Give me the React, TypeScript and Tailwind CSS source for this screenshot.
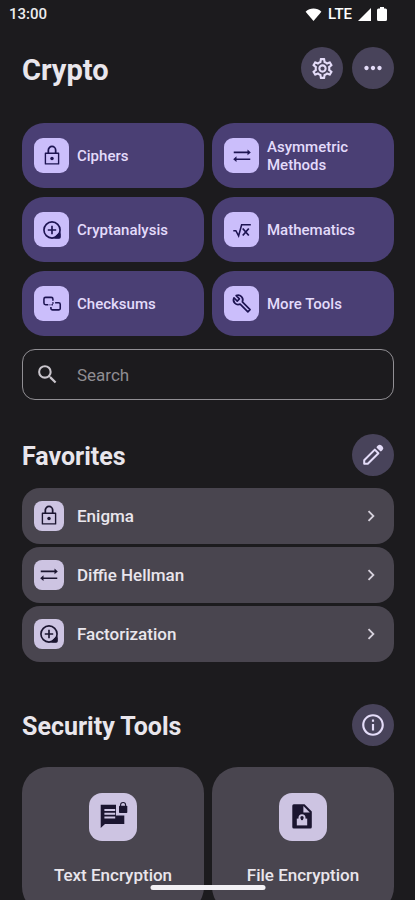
import type { ReactNode } from 'react';
import {
  MdChevronRight,
  MdInfoOutline,
  MdMoreHoriz,
  MdOutlineSettings,
  MdSearch,
} from 'react-icons/md';

const LockIcon = () => (
  <svg viewBox="0 0 24 24" className="size-[22px]" fill="none" stroke="currentColor" strokeWidth="1.5" aria-hidden="true">
    <path d="M4.8 9h14.4v11.6H4.8z" strokeLinejoin="round" />
    <path d="M8 9V5.6a4 4 0 0 1 8 0V9" strokeWidth="1.9" />
    <circle cx="12" cy="14.6" r="1.9" fill="currentColor" stroke="none" />
  </svg>
);

const ArrowsIcon = () => (
  <svg viewBox="0 0 24 24" className="size-[22px]" fill="currentColor" aria-hidden="true">
    <path d="M3 7.2h15V5l3.6 3.1-3.6 3.1V9H3zM21 14.6H6v-2.2l-3.6 3.1L6 18.6v-2.2h15z" />
  </svg>
);

const AnalysisIcon = () => (
  <svg viewBox="0 0 24 24" className="size-[22px]" fill="none" stroke="currentColor" strokeWidth="1.8" aria-hidden="true">
    <circle cx="12" cy="12" r="8.8" />
    <path d="M12 7.4v9.2M7.4 12h9.2" />
    <path d="M21.6 14v5.6a2 2 0 0 1-2 2H14c3.8-.8 6.8-3.8 7.6-7.6z" fill="currentColor" stroke="none" />
    <path d="M20 15.5V20h-4.5z" fill="currentColor" />
  </svg>
);

const RootIcon = () => (
  <svg viewBox="0 0 24 24" className="size-[22px]" fill="none" stroke="currentColor" strokeWidth="1.7" aria-hidden="true">
    <path d="M2.5 12.8h2.8l3 5.6L11.6 6.2H21.6" />
    <path d="M12.8 10.4l6.6 7.6M19.4 10.4l-6.6 7.6" strokeWidth="1.9" />
  </svg>
);

const ChecksumIcon = () => (
  <svg viewBox="0 0 24 24" className="size-[22px]" fill="none" stroke="currentColor" strokeWidth="1.7" aria-hidden="true">
    <path d="M8 12.8H5A1.8 1.8 0 0 1 3.2 11V6.6A1.8 1.8 0 0 1 5 4.8h6.2A1.8 1.8 0 0 1 13 6.6v1.8" />
    <path d="M13 10v2.8H9.4" strokeDasharray="1.6 1.2" />
    <path d="M15.4 10.6h3.8a1.8 1.8 0 0 1 1.8 1.8v4.2a1.8 1.8 0 0 1-1.8 1.8h-6.6a1.8 1.8 0 0 1-1.8-1.8v-1.4" />
  </svg>
);

const WrenchIcon = () => (
  <svg viewBox="0 0 24 24" className="size-[22px]" fill="none" stroke="currentColor" strokeWidth="1.8" strokeLinejoin="round" aria-hidden="true">
    <path d="M3.2 5.2l3.6 3.6 2.4-2.4-3.6-3.6c2-.8 4.3-.4 5.8 1.1 1.6 1.6 1.9 3.9 1 5.8l8.4 8.4-2.4 2.4-8.4-8.4c-1.9.9-4.2.6-5.8-1-1.5-1.5-1.9-3.9-1-5.9z" />
  </svg>
);

const PencilIcon = () => (
  <svg viewBox="0 0 24 24" className="size-6" fill="none" stroke="currentColor" strokeWidth="2" strokeLinejoin="round" aria-hidden="true">
    <path d="M3.2 17.2 13.8 6.6l3.6 3.6L6.8 20.8H3.2z" />
    <path d="M16.6 4.2l1-1a1.6 1.6 0 0 1 2.2 0l1 1a1.6 1.6 0 0 1 0 2.200l-1 1z" fill="currentColor" />
  </svg>
);

const TextLockIcon = () => (
  <svg viewBox="0 0 28 28" className="size-7 overflow-visible" aria-hidden="true">
    <path d="M1.7 1.8H17v10.8h8.3V21H6l-4.300 4z" fill="currentColor" />
    <path d="M5.4 7h10.8M5.4 10.8h10.8M5.4 14.6h10.8" stroke="#cdc4e2" strokeWidth="2" />
    <path d="M21.6 3.5V2a2.5 2.5 0 0 1 5 0v1.5" fill="none" stroke="currentColor" strokeWidth="1.1" />
    <rect x="20" y="2.8" width="8.3" height="7.2" rx="0.8" fill="currentColor" />
  </svg>
);

const FileLockIcon = () => (
  <svg viewBox="0 0 28 28" className="size-7" aria-hidden="true">
    <path d="M4.8 1.3h10.700l7.300 7.200v15.600a1.500 1.500 0 0 1-1.500 1.500H4.800a1.500 1.500 0 0 1-1.500-1.500V2.800a1.500 1.500 0 0 1 1.500-1.500z" fill="currentColor" />
    <path d="M14.4 3v6.400h6.400z" fill="#cdc4e2" />
    <path d="M10.4 16v-1.200a2.600 2.600 0 0 1 5.200 0V16" fill="none" stroke="#cdc4e2" strokeWidth="1.8" />
    <path d="M7.8 15.6h10.400v6.800H7.800z" fill="#cdc4e2" />
    <circle cx="13" cy="16" r="1.2" fill="currentColor" />
  </svg>
);

const categories: { label: string; icon: ReactNode }[] = [
  { label: 'Ciphers', icon: <LockIcon /> },
  { label: 'Asymmetric Methods', icon: <ArrowsIcon /> },
  { label: 'Cryptanalysis', icon: <AnalysisIcon /> },
  { label: 'Mathematics', icon: <RootIcon /> },
  { label: 'Checksums', icon: <ChecksumIcon /> },
  { label: 'More Tools', icon: <WrenchIcon /> },
];

const favorites: { label: string; icon: ReactNode }[] = [
  { label: 'Enigma', icon: <LockIcon /> },
  { label: 'Diffie Hellman', icon: <ArrowsIcon /> },
  { label: 'Factorization', icon: <AnalysisIcon /> },
];

const tools: { label: string; icon: ReactNode }[] = [
  { label: 'Text Encryption', icon: <TextLockIcon /> },
  { label: 'File Encryption', icon: <FileLockIcon /> },
];

function RoundButton({ label, children }: { label: string; children: ReactNode }) {
  return (
    <button type="button" aria-label={label} className="flex size-[42px] items-center justify-center rounded-full bg-[#48435a] text-[#e4dcf8]">
      {children}
    </button>
  );
}

function StatusBar() {
  return (
    <div className="flex h-7 shrink-0 items-center justify-between pl-[9px] pr-7 text-[15px] font-medium text-[#ececee]">
      <span>13:00</span>
      <div className="flex items-center gap-[6px] text-white">
        <svg viewBox="0 0 18 14" className="h-[13px] w-[17px]" fill="currentColor" aria-hidden="true">
          <path d="M9 14 0.5 4C5 -0.5 13 -0.5 17.5 4z" />
        </svg>
        <span>LTE</span>
        <div className="flex items-center gap-[6px]">
          <svg viewBox="0 0 14 14" className="size-[13px]" fill="currentColor" aria-hidden="true">
            <path d="M14 0v14H0z" />
          </svg>
          <svg viewBox="0 0 10 14" className="h-3.5 w-2.5" fill="currentColor" aria-hidden="true">
            <path d="M3 0h4v1.5h1.5A1.5 1.5 0 0 1 10 3v9.5A1.5 1.5 0 0 1 8.5 14h-7A1.5 1.5 0 0 1 0 12.5V3a1.5 1.5 0 0 1 1.5-1.5H3z" />
          </svg>
        </div>
      </div>
    </div>
  );
}

export default function App() {
  return (
    <div className="flex h-screen flex-col overflow-hidden bg-[#1c1b1e] font-['Roboto',sans-serif] text-[#e9e6ec]">
      <StatusBar />
      <main className="min-h-0 flex-1 overflow-y-auto pb-10 pl-[22px] pr-[21px] pt-[19px] [scrollbar-width:none]">
        <header className="flex items-center justify-between">
          <h1 className="pt-1 text-[29px] font-bold leading-9">Crypto</h1>
          <div className="flex gap-[9px]">
            <RoundButton label="Settings">
              <MdOutlineSettings className="size-[25px]" />
            </RoundButton>
            <RoundButton label="More options">
              <MdMoreHoriz className="size-[26px]" />
            </RoundButton>
          </div>
        </header>

        <nav aria-label="Categories" className="mt-[34px] grid grid-cols-2 gap-x-2 gap-y-[9px]">
          {categories.map(({ label, icon }) => (
            <button key={label} type="button" className="flex h-[65px] items-center gap-2 rounded-[22px] bg-[#4a3f74] pl-3 pr-9 text-left text-[15px] font-medium leading-[18px] text-[#e3dbfb]">
              <span className="flex size-[35px] shrink-0 items-center justify-center rounded-[9px] bg-[#cbbefb] text-[#1d1452]">
                {icon}
              </span>
              {label}
            </button>
          ))}
        </nav>

        <label className="mt-[13px] flex h-[51px] items-center gap-[17px] rounded-[13px] border border-[#918f94] pl-3 pr-4 text-[#c9c5cc]">
          <MdSearch className="size-[25px] shrink-0" />
          <input type="search" aria-label="Search" placeholder="Search" className="min-w-0 flex-1 bg-transparent text-[17px] leading-6 outline-none placeholder:text-[#8f8d92]" />
        </label>

        <section aria-labelledby="favorites" className="mt-[34px]">
          <div className="flex items-center justify-between">
            <h2 id="favorites" className="pt-1 text-[25px] font-bold leading-8">Favorites</h2>
            <RoundButton label="Edit favorites">
              <PencilIcon />
            </RoundButton>
          </div>
          <ul className="mt-3 flex flex-col gap-[3px]">
            {favorites.map(({ label, icon }) => (
              <li key={label}>
                <button type="button" className="flex h-14 w-full items-center gap-[13px] rounded-[18px] bg-[#49454f] pl-3 pr-3 text-left text-[17px] font-medium">
                  <span className="flex size-[30px] shrink-0 items-center justify-center rounded-lg bg-[#cdc4e2] text-[#1b1530]">
                    {icon}
                  </span>
                  <span className="flex-1 pt-0.5">{label}</span>
                  <MdChevronRight className="size-[22px] text-[#d6d1dc]" />
                </button>
              </li>
            ))}
          </ul>
        </section>

        <section aria-labelledby="security" className="mt-[42px]">
          <div className="flex items-center justify-between">
            <h2 id="security" className="pt-1 text-[25px] font-bold leading-8">Security Tools</h2>
            <RoundButton label="About security tools">
              <MdInfoOutline className="size-[26px]" />
            </RoundButton>
          </div>
          <div className="mt-[21px] grid grid-cols-2 gap-2">
            {tools.map(({ label, icon }) => (
              <button key={label} type="button" className="flex flex-col items-center gap-6 rounded-[26px] bg-[#49454f] px-3 pb-7 pt-[26px] text-[17px] font-medium leading-5">
                <span className="flex size-12 items-center justify-center rounded-[13px] bg-[#cdc4e2] text-[#1b1530]">
                  {icon}
                </span>
                {label}
              </button>
            ))}
          </div>
        </section>
      </main>
      <div className="fixed bottom-2.5 left-1/2 h-[5px] w-[115px] -translate-x-1/2 rounded-full bg-[#f3f1f5]" />
    </div>
  );
}
